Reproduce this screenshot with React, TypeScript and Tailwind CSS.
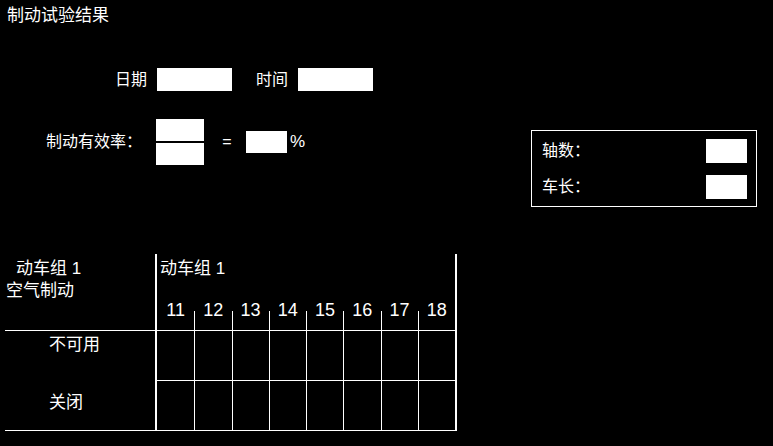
const cols = [11, 12, 13, 14, 15, 16, 17, 18];

function Box({ className }: { className: string }) {
  return <div className={`bg-white ${className}`} />;
}

export default function App() {
  return (
    <div
      className="w-[773px] h-[446px] bg-black text-white overflow-hidden"
      style={{ fontFamily: '"Liberation Sans", "Noto Sans CJK SC", sans-serif' }}
    >
      <div className="pt-[4px] pl-[7px] text-[17px] leading-[24px]">制动试验结果</div>

      <div className="flex items-start">
        <div className="w-[531px] flex flex-col">
          <div className="mt-[40px] flex items-center h-[23px] pl-[115px] text-[16px] leading-[24px]">
            <span className="w-[42px]">日期</span>
            <Box className="w-[75px] h-[23px]" />
            <span className="ml-[24px] w-[42px]">时间</span>
            <Box className="w-[75px] h-[23px]" />
          </div>

          <div className="mt-[28px] flex items-center pl-[46px] text-[16px] leading-[24px]">
            <span className="w-[110px]">制动有效率：</span>
            <div className="flex flex-col gap-[2px]">
              <Box className="w-[48px] h-[22px]" />
              <Box className="w-[48px] h-[22px]" />
            </div>
            <span className="w-[42px] pl-[4px] text-center">=</span>
            <Box className="w-[41px] h-[22px]" />
            <span className="ml-[3px] text-[17px]">%</span>
          </div>
        </div>

        <div className="mt-[102px] w-[226px] border border-white pt-[8px] pb-[7px] pl-[10px] pr-[9px] flex flex-col gap-[12px] text-[16px] leading-[24px]">
          <div className="flex items-center justify-between h-[24px]">
            <span>轴数：</span>
            <Box className="w-[41px] h-[24px]" />
          </div>
          <div className="flex items-center justify-between h-[24px]">
            <span>车长：</span>
            <Box className="w-[41px] h-[24px]" />
          </div>
        </div>
      </div>

      <div className="mt-[47px] ml-[5px] w-[452px] flex text-[17px] leading-[24px]">
        <div className="w-[150px] flex flex-col">
          <div className="h-[76px] pt-[4px] leading-[22px]">
            <div className="pl-[11px]">动车组 1</div>
            <div className="pl-[1px]">空气制动</div>
          </div>
          <div className="h-[101px] border-y border-white pl-[44px] pt-[2px]">
            <div className="h-[58px]">不可用</div>
            <div>关闭</div>
          </div>
        </div>

        <div className="w-[302px] border-x-2 border-white flex flex-col">
          <div className="h-[76px] flex flex-col justify-between">
            <div className="pl-[3px] pt-[4px] leading-[22px]">动车组 1</div>
            <div className="grid grid-cols-8 h-[30px]">
              {cols.map((n, i) => (
                <div key={n} className="flex items-end">
                  {i > 0 && <div className="w-px h-[19px] bg-white shrink-0" />}
                  <span className="flex-1 self-start text-center text-[18px] leading-[20px]">{n}</span>
                </div>
              ))}
            </div>
          </div>
          <div className="border-t border-white">
            {[0, 1].map((r) => (
              <div key={r} className="grid grid-cols-8 h-[50px] border-b border-white">
                {cols.map((n, i) => (
                  <div key={n} className={i > 0 ? 'border-l border-white' : ''} />
                ))}
              </div>
            ))}
          </div>
        </div>
      </div>
    </div>
  );
}
